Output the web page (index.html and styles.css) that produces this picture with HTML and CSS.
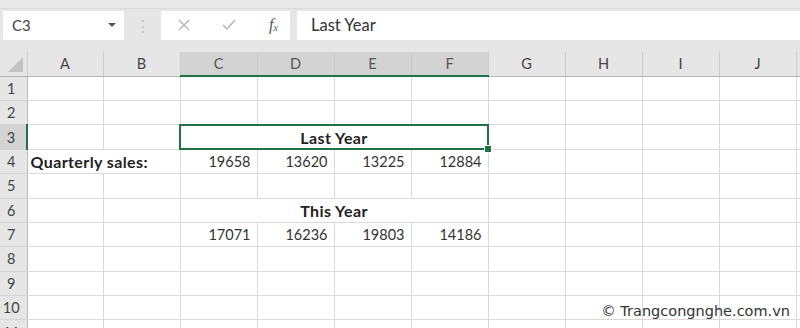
FILE: index.html
```html
<!DOCTYPE html>
<html>
<head>
<title>Quarterly sales</title>
<link rel="stylesheet" href="styles.css">
</head>
<body>
<div class="window">
  <div class="top-strip"></div>
  <div class="formula-row">
    <div class="name-box">
      <span>C3</span>
      <span class="dropdown"></span>
    </div>
    <div class="grip">&#8942;</div>
    <div class="formula-icons">
      <svg width="14" height="14" viewBox="0 0 14 14"><path d="M2 2 L12 12 M12 2 L2 12" stroke="#b4b4b4" stroke-width="1.4" fill="none"/></svg>
      <svg width="16" height="14" viewBox="0 0 16 14"><path d="M2 7 L6 11 L14 2" stroke="#b4b4b4" stroke-width="1.4" fill="none"/></svg>
      <span class="fx"><i>f</i><sub>x</sub></span>
    </div>
    <div class="formula-input">Last Year</div>
  </div>

  <div class="sheet">
    <table class="grid">
      <colgroup>
        <col class="col-rowhead">
        <col class="col-a">
        <col><col><col><col><col><col><col><col><col><col>
      </colgroup>
      <tr class="head">
        <th class="corner">
          <svg width="27" height="24" viewBox="0 0 27 24"><path d="M23 5 L23 20 L8 20 Z" fill="#c2c2c2"/></svg>
        </th>
        <th>A</th><th>B</th>
        <th class="sel">C</th><th class="sel">D</th><th class="sel">E</th><th class="sel">F</th>
        <th>G</th><th>H</th><th>I</th><th>J</th><th></th>
      </tr>
      <tr><th>1</th><td></td><td></td><td></td><td></td><td></td><td></td><td></td><td></td><td></td><td></td><td></td></tr>
      <tr><th>2</th><td></td><td></td><td></td><td></td><td></td><td></td><td></td><td></td><td></td><td></td><td></td></tr>
      <tr><th class="sel-row">3</th><td></td><td></td><td colspan="4" class="title selected">Last Year</td><td></td><td></td><td></td><td></td><td></td></tr>
      <tr><th>4</th><td colspan="2" class="label">Quarterly sales:</td><td class="num">19658</td><td class="num">13620</td><td class="num">13225</td><td class="num">12884</td><td></td><td></td><td></td><td></td><td></td></tr>
      <tr><th>5</th><td></td><td></td><td></td><td></td><td></td><td></td><td></td><td></td><td></td><td></td><td></td></tr>
      <tr><th>6</th><td></td><td></td><td colspan="4" class="title">This Year</td><td></td><td></td><td></td><td></td><td></td></tr>
      <tr><th>7</th><td></td><td></td><td class="num">17071</td><td class="num">16236</td><td class="num">19803</td><td class="num">14186</td><td></td><td></td><td></td><td></td><td></td></tr>
      <tr><th>8</th><td></td><td></td><td></td><td></td><td></td><td></td><td></td><td></td><td></td><td></td><td></td></tr>
      <tr><th>9</th><td></td><td></td><td></td><td></td><td></td><td></td><td></td><td></td><td></td><td></td><td></td></tr>
      <tr><th>10</th><td></td><td></td><td></td><td></td><td></td><td></td><td></td><td></td><td></td><td></td><td></td></tr>
      <tr><th>11</th><td></td><td></td><td></td><td></td><td></td><td></td><td></td><td></td><td></td><td></td><td></td></tr>
    </table>
    <div class="watermark">&copy; Trangcongnghe.com.vn</div>
  </div>
</div>
</body>
</html>
```

FILE: styles.css
```css
body {
  margin: 0;
  font-family: Lato, "Liberation Sans", sans-serif;
  background-color: #e6e6e6;
  overflow: hidden;
}
.window {
  width: 800px;
  height: 328px;
  display: flex;
  flex-direction: column;
  overflow: hidden;
}
.top-strip {
  height: 8px;
  border-bottom: 1px solid #dadada;
  background-color: #e9e9e9;
}
.formula-row {
  display: flex;
  align-items: stretch;
  height: 29px;
  margin-top: 2px;
  padding-left: 3px;
}
.name-box {
  width: 121px;
  background-color: white;
  display: flex;
  align-items: center;
  justify-content: space-between;
  padding: 0 8px 0 9px;
  box-sizing: border-box;
  font-size: 15px;
  color: #444;
}
.dropdown {
  width: 0;
  height: 0;
  border-left: 4px solid transparent;
  border-right: 4px solid transparent;
  border-top: 4px solid #555;
}
.grip {
  width: 37px;
  text-align: center;
  color: #c4c4c4;
  font-size: 16px;
  line-height: 29px;
}
.formula-icons {
  width: 129px;
  background-color: white;
  display: flex;
  align-items: center;
  gap: 30px;
  padding-left: 16px;
  box-sizing: border-box;
}
.fx {
  font-family: "Liberation Serif", serif;
  font-size: 16px;
  color: #555;
  margin-left: 2px;
}
.fx sub {
  font-size: 10px;
  font-style: italic;
  vertical-align: -1px;
}
.formula-input {
  flex-grow: 1;
  margin-left: 7px;
  background-color: white;
  padding-left: 14px;
  font-size: 16.5px;
  line-height: 29px;
  color: #333;
}
.sheet {
  position: relative;
  margin-top: 12px;
  flex-grow: 1;
  overflow: hidden;
  background-color: white;
}
.grid {
  border-collapse: collapse;
  table-layout: fixed;
  width: 873px;
}
.grid col { width: 77px; }
.grid col.col-rowhead { width: 27px; }
.grid col.col-a { width: 76px; }
.grid tr { height: 24.4px; }
.grid tr.head { height: 24px; }
.grid th {
  background-color: #e6e6e6;
  font-weight: normal;
  font-size: 14.5px;
  color: #444;
  padding: 0;
  border: 1px solid #cacaca;
  border-top: none;
}
.grid tr.head th {
  border-bottom: 1px solid #b5b5b5;
}
.grid tr.head th.sel {
  background-color: #d3d3d3;
  color: #555;
  border-bottom: 2px solid #217346;
}
.grid th.corner {
  border-left: none;
  line-height: 0;
}
.grid tr:not(.head) th {
  text-align: center;
  padding-right: 4px;
  border-left: none;
  border-right: 1px solid #bdbdbd;
  border-bottom: 1px solid #d4d4d4;
}
.grid tr:not(.head) th.sel-row {
  background-color: #d3d3d3;
  border-right: 2px solid #217346;
}
.grid td {
  border: 1px solid #dadada;
  padding: 0 6px;
  font-size: 14.5px;
  color: #333;
  white-space: nowrap;
}
.grid td.num { text-align: right; }
.grid td.label {
  font-weight: bold;
  font-size: 16px;
  letter-spacing: 0.4px;
  color: #222;
  padding-left: 3px;
}
.grid td.title {
  text-align: center;
  font-weight: bold;
  font-size: 16px;
  letter-spacing: 0.4px;
  color: #222;
}
.grid td.selected {
  position: relative;
  outline: 2px solid #217346;
  outline-offset: -1px;
}
.grid td.selected::after {
  content: "";
  position: absolute;
  right: -4px;
  bottom: -4px;
  width: 6px;
  height: 6px;
  background-color: #217346;
  border: 1px solid white;
}
.watermark {
  position: absolute;
  right: 10px;
  bottom: 9px;
  font-family: "DejaVu Sans", sans-serif;
  font-size: 14.5px;
  color: #333;
}
```
